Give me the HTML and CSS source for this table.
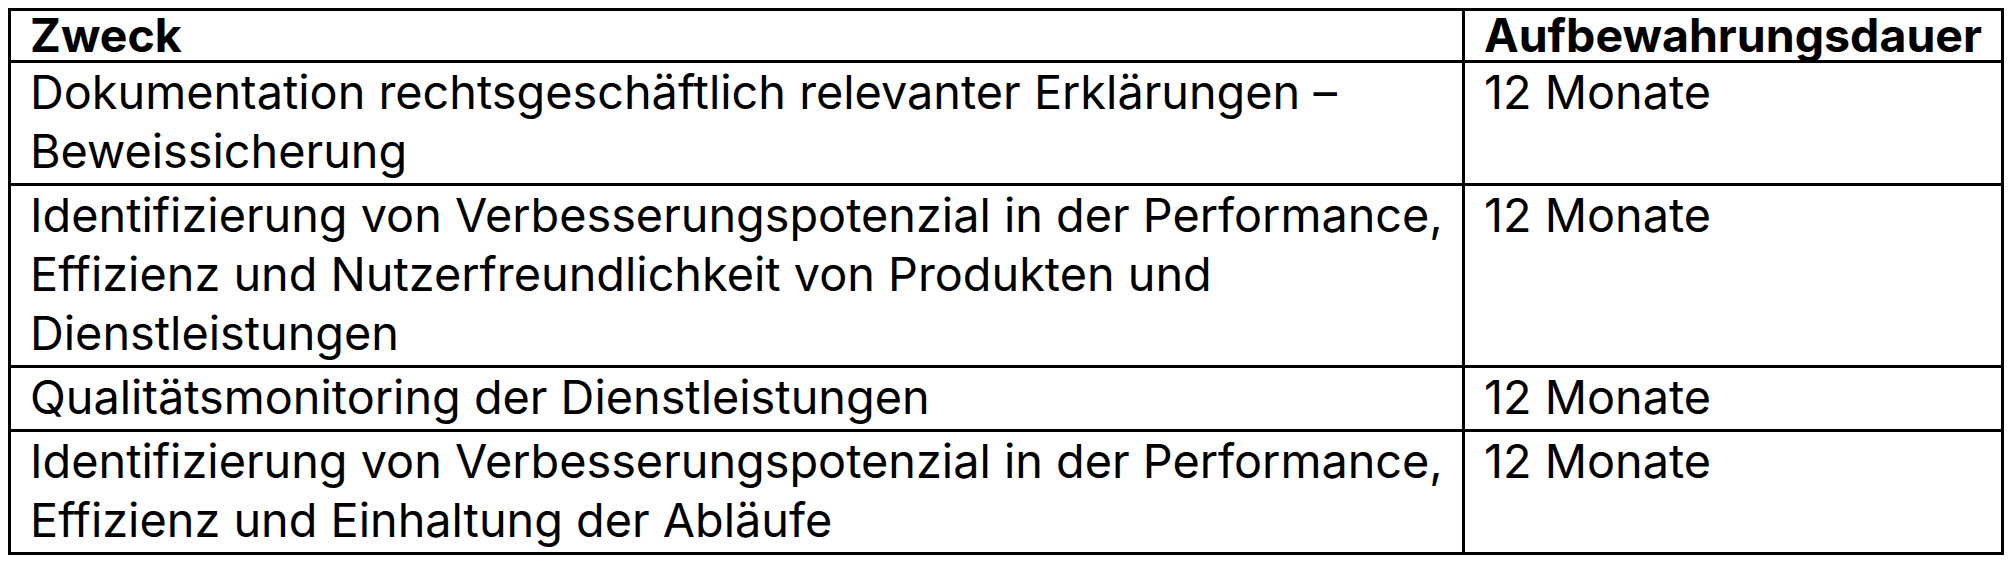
FILE: index.html
```html
<!DOCTYPE html>
<html lang="de">
<head>
<meta charset="utf-8">
<title>Aufbewahrungsdauer</title>
<link rel="stylesheet" href="styles.css">
</head>
<body>
<table class="retention">
  <thead>
    <tr>
      <th class="col-purpose">Zweck</th>
      <th class="col-duration">Aufbewahrungsdauer</th>
    </tr>
  </thead>
  <tbody>
    <tr>
      <td>Dokumentation rechtsgeschäftlich relevanter Erklärungen –<br>Beweissicherung</td>
      <td>12 Monate</td>
    </tr>
    <tr>
      <td>Identifizierung von Verbesserungspotenzial in der Performance,<br>Effizienz und Nutzerfreundlichkeit von Produkten und<br>Dienstleistungen</td>
      <td>12 Monate</td>
    </tr>
    <tr>
      <td>Qualitätsmonitoring der Dienstleistungen</td>
      <td>12 Monate</td>
    </tr>
    <tr>
      <td>Identifizierung von Verbesserungspotenzial in der Performance,<br>Effizienz und Einhaltung der Abläufe</td>
      <td>12 Monate</td>
    </tr>
  </tbody>
</table>
</body>
</html>
```

FILE: styles.css
```css
html, body {
  background: #fff;
}
body {
  margin: 8px;
  font-family: Inter, "Liberation Sans", sans-serif;
  color: #000;
}
.retention {
  width: 100%;
  border-collapse: collapse;
  border: 3px solid #000;
}
.retention th,
.retention td {
  border: 3px solid #000;
  text-align: left;
  vertical-align: top;
  white-space: nowrap;
}
.retention th {
  font-size: 46.5px;
  font-weight: 700;
  line-height: 49px;
  padding: 0 19px;
}
.retention td {
  font-size: 46.8px;
  font-weight: 400;
  line-height: 59px;
  padding: 0 19px 2px;
}
.col-duration {
  width: 497px;
}
```
